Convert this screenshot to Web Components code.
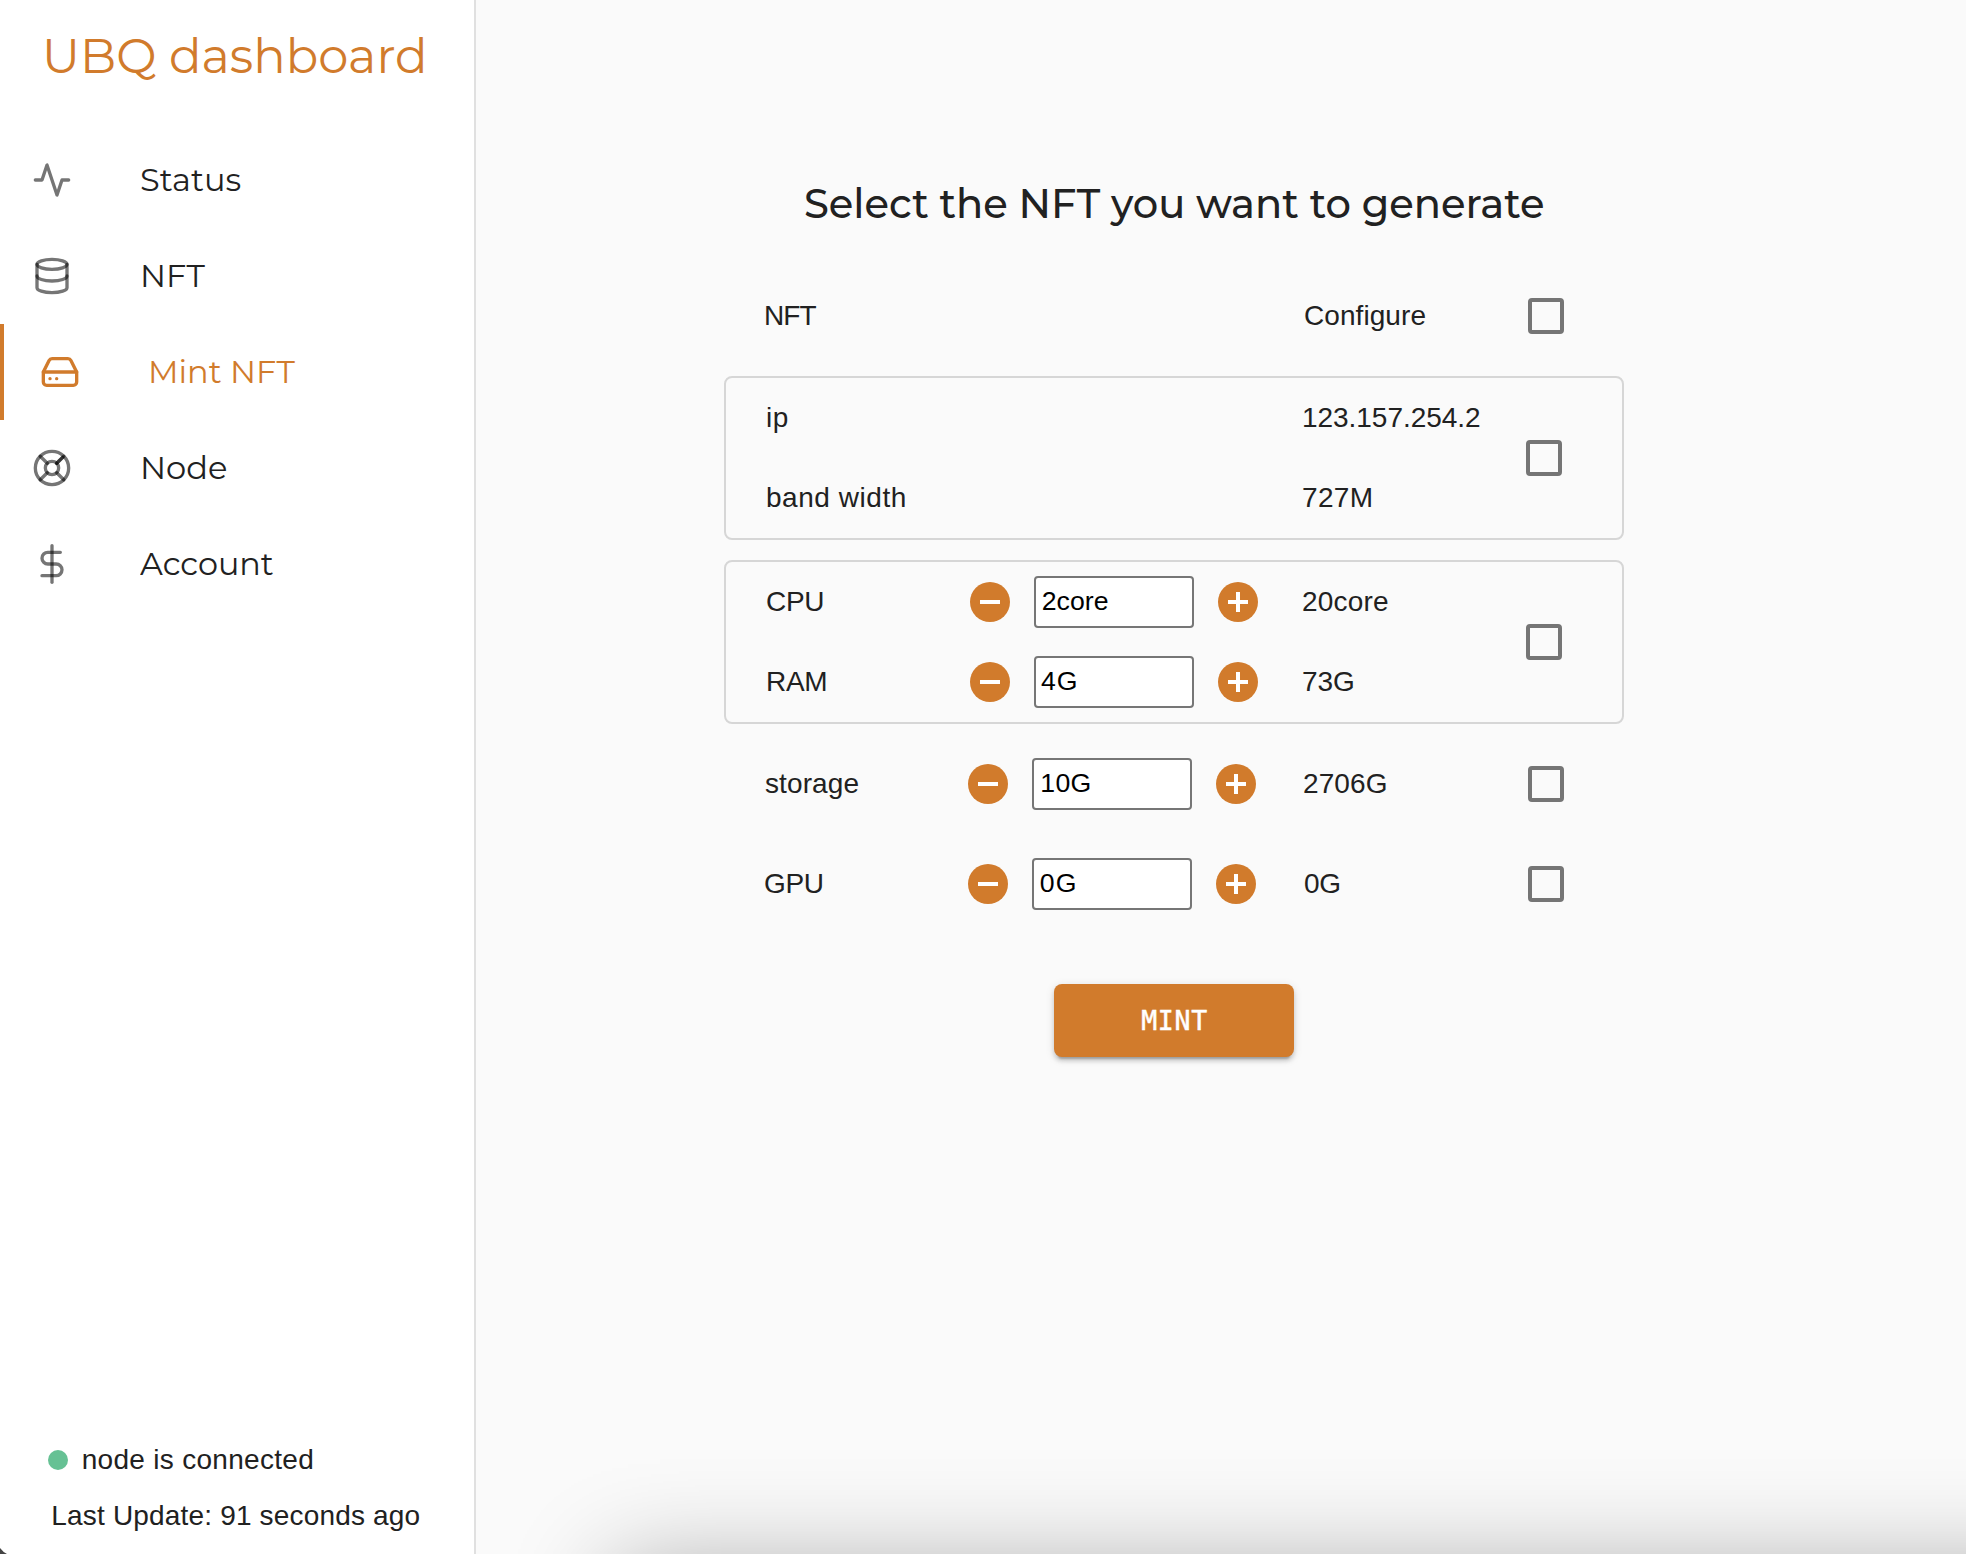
<!DOCTYPE html>
<html lang="en">
<head>
<meta charset="utf-8">
<title>UBQ dashboard</title>
<style>
html,body{margin:0;height:100%;overflow:hidden}
body{font:28px/40px "Liberation Sans",Arial,sans-serif;color:#212121;background:#fafafa}
</style>
</head>
<body>
<ubq-app></ubq-app>
<script>
const ACCENT = '#d17b2c';
const ctx = document.createElement('canvas').getContext('2d');

class Base extends HTMLElement {
  connectedCallback() {
    if (this.shadowRoot) return;
    this.attachShadow({mode: 'open'}).innerHTML = this.render();
    this.ready();
  }
  ready() {}
  a(n, d = '') { return this.getAttribute(n) ?? d; }
}

/* A line of text fitted to a given ink width: by tracking, or by stretch. */
class FitText extends Base {
  render() {
    return `<style>
:host{display:block;white-space:pre;flex:none}
span{display:inline-block;transform-origin:0 50%}
</style><span>${this.a('text')}</span>`;
  }
  ready() {
    const s = this.shadowRoot.querySelector('span'), t = this.a('text'), w = +this.a('w');
    const c = getComputedStyle(this);
    ctx.font = `${c.fontWeight} ${c.fontSize} ${c.fontFamily}`;
    const m = ctx.measureText(t);
    const left = -m.actualBoundingBoxLeft, ink = m.actualBoundingBoxRight - left;
    let k = 1;
    if (this.hasAttribute('stretch')) { k = w / ink; s.style.transform = `scaleX(${k})`; }
    else s.style.letterSpacing = (w - ink) / (t.length - 1) + 'px';
    s.style.marginLeft = -left * k + 'px';
  }
}
customElements.define('fit-text', FitText);

const ICONS = {
  activity: '<polyline points="22 12 18 12 15 21 9 3 6 12 2 12"/>',
  database: '<ellipse cx="12" cy="5" rx="9" ry="3"/><path d="M21 12c0 1.66-4 3-9 3s-9-1.34-9-3"/><path d="M3 5v14c0 1.66 4 3 9 3s9-1.34 9-3V5"/>',
  drive: '<line x1="22" y1="12" x2="2" y2="12"/><path d="M5.45 5.11L2 12v6a2 2 0 0 0 2 2h16a2 2 0 0 0 2-2v-6l-3.45-6.89A2 2 0 0 0 16.76 4H7.24a2 2 0 0 0-1.79 1.11z"/><line x1="6" y1="16" x2="6.01" y2="16"/><line x1="10" y1="16" x2="10.01" y2="16"/>',
  buoy: '<circle cx="12" cy="12" r="10"/><circle cx="12" cy="12" r="4"/><line x1="4.93" y1="4.93" x2="9.17" y2="9.17"/><line x1="14.83" y1="14.83" x2="19.07" y2="19.07"/><line x1="14.83" y1="9.17" x2="19.07" y2="4.93"/><line x1="14.83" y1="9.17" x2="18.36" y2="5.64"/><line x1="4.93" y1="19.07" x2="9.17" y2="14.83"/>',
  dollar: '<line x1="12" y1="1" x2="12" y2="23"/><path d="M17 5H9.5a3.5 3.5 0 0 0 0 7h5a3.5 3.5 0 0 1 0 7H6"/>'
};

class NavItem extends Base {
  render() {
    const on = this.hasAttribute('active');
    return `<style>
:host{display:flex;align-items:center;height:96px;box-sizing:border-box;padding-left:${on ? 36 : 32}px;
 font:32px/44px Montserrat,Lato,sans-serif;color:${on ? ACCENT : '#212121'};${on ? `border-left:4px solid ${ACCENT}` : ''}}
svg{width:40px;height:40px;flex:none;fill:none;stroke:${on ? ACCENT : 'rgba(0,0,0,.54)'};stroke-width:2;stroke-linecap:round;stroke-linejoin:round}
fit-text{margin-left:${+this.a('x') - (on ? 80 : 72)}px}
</style><svg viewBox="0 0 24 24">${ICONS[this.a('icon')]}</svg><fit-text stretch text="${this.a('label')}" w="${this.a('w')}"></fit-text>`;
  }
}
customElements.define('nav-item', NavItem);

class SideBar extends Base {
  render() {
    return `<style>
:host{display:flex;flex-direction:column;width:474px;flex:none;height:100%;background:#fff;border-right:2px solid #e0e0e0}
h1{margin:0;height:112px;padding:0 0 20px 47px;box-sizing:border-box;font:48px/112px Montserrat,Lato,sans-serif;color:${ACCENT}}
nav{margin-top:20px;flex:1}
nav fit-text{position:static}
.status{display:flex;align-items:center;height:40px;padding-left:48px}
i{width:20px;height:20px;border-radius:50%;background:#66c194;margin-right:14.7px}
.update{height:40px;padding-left:53.3px;margin:16px 0 18px}
</style>
<h1><fit-text stretch text="UBQ dashboard" w="376"></fit-text></h1>
<nav>
<nav-item icon="activity" label="Status" x="141.3" w="99.5"></nav-item>
<nav-item icon="database" label="NFT" x="143" w="62.4"></nav-item>
<nav-item icon="drive" label="Mint NFT" x="151" w="144.4" active></nav-item>
<nav-item icon="buoy" label="Node" x="143.1" w="83"></nav-item>
<nav-item icon="dollar" label="Account" x="140.3" w="133.8"></nav-item>
</nav>
<div class="status"><i></i><fit-text text="node is connected" w="229.5"></fit-text></div>
<div class="update"><fit-text text="Last Update: 91 seconds ago" w="366.3"></fit-text></div>`;
  }
}
customElements.define('side-bar', SideBar);

class CheckBox extends Base {
  render() { return `<style>:host{display:block;flex:none;width:36px;height:36px;box-sizing:border-box;border:4px solid #757575;border-radius:4px}</style>`; }
}
customElements.define('check-box', CheckBox);

class RoundButton extends Base {
  render() {
    return `<style>:host,svg{display:block;flex:none;width:40px;height:40px}</style>
<svg viewBox="0 0 40 40"><circle cx="20" cy="20" r="20" fill="${ACCENT}"/><path fill="#fff" d="${this.a('kind') === 'plus' ? 'M18 10h4v8h8v4h-8v8h-4v-8h-8v-4h8z' : 'M10 18h20v4H10z'}"/></svg>`;
  }
}
customElements.define('round-button', RoundButton);

class NumberStepper extends Base {
  render() {
    return `<style>
:host{display:flex;align-items:center;gap:24px;flex:none}
.field{width:160px;height:52px;box-sizing:border-box;border:2px solid #767676;border-radius:4px;background:#fff;color:#000;
 font-size:26.67px;line-height:46px;padding-left:${+this.a('pad')}px}
</style><round-button kind="minus"></round-button><div class="field"><fit-text text="${this.a('value')}" w="${this.a('w')}"></fit-text></div><round-button kind="plus"></round-button>`;
  }
}
customElements.define('number-stepper', NumberStepper);

/* label | optional stepper | available amount */
class ResourceRow extends Base {
  render() {
    return `<style>
:host{display:grid;grid-template-columns:203px 333px 1fr;align-items:center;height:80px}
.label{padding-left:${this.a('lp', 0)}px}.amount{padding-left:${this.a('ap', 0)}px}
</style><fit-text class="label" text="${this.a('label')}" w="${this.a('lw')}"></fit-text>
<div><slot></slot></div>
<fit-text class="amount" text="${this.a('amount')}" w="${this.a('aw')}"></fit-text>`;
  }
}
customElements.define('resource-row', ResourceRow);

class ResourceGroup extends Base {
  render() {
    const boxed = this.hasAttribute('boxed');
    return `<style>
:host{display:flex;align-items:center;box-sizing:border-box;width:900px;
${boxed ? 'height:164px;border:2px solid #d6d6d6;border-radius:8px;margin:10px 0;padding:0 60px 0 41px' : 'height:100px;padding:0 60px 0 41px'}}
.rows{flex:1}
</style><div class="rows"><slot></slot></div><check-box></check-box>`;
  }
}
customElements.define('resource-group', ResourceGroup);

class MintButton extends Base {
  render() {
    return `<style>
:host{display:flex;justify-content:center;align-items:center;width:240px;height:73px;border-radius:8px;background:${ACCENT};color:#fff;
font:26.5px/40px "DejaVu Sans Mono",monospace;box-shadow:0 6px 2px -4px rgba(0,0,0,.2),0 4px 4px rgba(0,0,0,.14),0 2px 10px rgba(0,0,0,.12)}
fit-text{-webkit-text-stroke:.5px #fff;margin-left:2px}
</style><fit-text text="MINT" w="65"></fit-text>`;
  }
}
customElements.define('mint-button', MintButton);

class MintPage extends Base {
  render() {
    return `<style>
:host{display:flex;flex-direction:column;flex:1;padding-left:248px;align-items:flex-start}
h2{margin:178px 0 0;height:88px;padding-left:81px;font:500 40px/52px Montserrat,Lato,sans-serif}
mint-button{margin:50px 0 0 330px}
</style>
<h2><fit-text stretch text="Select the NFT you want to generate" w="738"></fit-text></h2>
<resource-group><resource-row label="NFT" lw="50.4" lp="1" amount="Configure" aw="120.4" ap="4"></resource-row></resource-group>
<resource-group boxed>
<resource-row label="ip" lw="20.7" amount="123.157.254.2" aw="176" ap="1"></resource-row>
<resource-row label="band width" lw="137.7" amount="727M" aw="68.7"></resource-row>
</resource-group>
<resource-group boxed>
<resource-row label="CPU" lw="56.3" amount="20core" aw="85"><number-stepper value="2core" w="65" pad="6.7"></number-stepper></resource-row>
<resource-row label="RAM" lw="58.3" lp="1" amount="73G" aw="50"><number-stepper value="4G" w="34.7" pad="5"></number-stepper></resource-row>
</resource-group>
<resource-group><resource-row label="storage" lw="93.4" amount="2706G" aw="81.7" ap="3"><number-stepper value="10G" w="47.3" pad="8.3"></number-stepper></resource-row></resource-group>
<resource-group><resource-row label="GPU" lw="57.7" amount="0G" aw="34.3" ap="4"><number-stepper value="0G" w="34" pad="6.7"></number-stepper></resource-row></resource-group>
<mint-button></mint-button>`;
  }
}
customElements.define('mint-page', MintPage);

class UbqApp extends Base {
  render() {
    return `<style>
:host{display:flex;position:relative;height:100vh;overflow:hidden}
.window-shadow{position:absolute;left:612px;right:-300px;top:100%;height:600px;margin-top:14px;box-shadow:0 0 96px rgba(0,0,0,.32)}
.corner{position:absolute;left:0;bottom:0;width:7px;height:6px}
</style><side-bar></side-bar><mint-page></mint-page><div class="window-shadow"></div>
<svg class="corner" viewBox="0 0 7 6"><path d="M0 0Q3 4 7 6H0z" fill="#444"/></svg>`;
  }
}
customElements.define('ubq-app', UbqApp);
</script>
</body>
</html>
